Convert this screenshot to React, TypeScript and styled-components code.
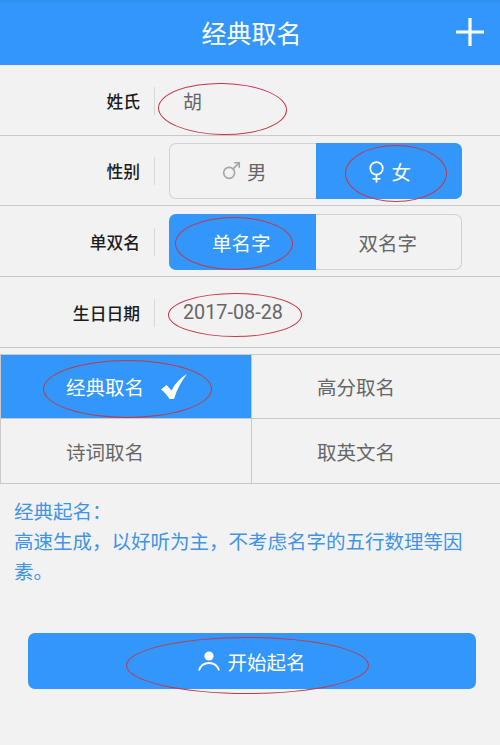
import React, { FC, ReactNode } from 'react'
import styled, { createGlobalStyle } from 'styled-components'
import { Mars, Venus } from 'lucide-react'

const BLUE = '#3296fa'
const CJK = '"Noto Sans CJK SC", "Noto Sans", sans-serif'

const GlobalStyle = createGlobalStyle`
  html, body {
    margin: 0;
    padding: 0;
    background: #f2f2f2;
  }
  body {
    font-family: Roboto, ${CJK};
  }
`

const Page = styled.div`
  width: 500px;
  height: 745px;
  overflow: hidden;
  position: relative;
  background: #f2f2f2;
`

const Header = styled.header`
  height: 65px;
  box-sizing: border-box;
  padding: 0 0 1px 3px;
  background: linear-gradient(#2f8eee 0, ${BLUE} 4px);
  color: #fff;
  position: relative;
  display: flex;
  align-items: center;
  justify-content: center;
  font-size: 25px;
`

const AddButton = styled.svg`
  position: absolute;
  right: 16px;
  top: 18px;
  width: 28px;
  height: 28px;
`

const Row = styled.div`
  height: 70.67px;
  box-sizing: border-box;
  padding-top: 2px;
  display: flex;
  align-items: center;
  position: relative;
  border-bottom: 1px solid #c9c9c9;
`

const Label = styled.div`
  width: 140px;
  text-align: right;
  font-size: 16.8px;
  font-weight: 500;
  color: #1c1c1c;
  flex: none;
`

const Divider = styled.div`
  width: 1px;
  height: 28px;
  background: #d8d8d8;
  margin: 0 14px;
  flex: none;
`

const Value = styled.div`
  color: #666;
  font-size: 19.8px;
  margin-left: 14px;
`

const NameValue = styled(Value)`
  font-size: 19px;
`

const Segmented = styled.div`
  width: 293px;
  height: 56px;
  display: flex;
  border-radius: 7px;
  overflow: hidden;
  box-shadow: inset 0 0 0 1px #d2d2d2;
`

const Segment = styled.div<{ $active?: boolean }>`
  flex: 1;
  display: flex;
  align-items: center;
  justify-content: center;
  gap: 5px;
  padding-right: 2px;
  font-size: 19.5px;
  background: ${p => (p.$active ? BLUE : 'transparent')};
  color: ${p => (p.$active ? '#fff' : '#666')};
`

const MaleSegment = styled(Segment)`
  padding: 0 0 0 2px;
`

const FemaleSegment = styled(Segment)`
  gap: 2px;
`

const GenderIcon = styled.span<{ $muted?: boolean }>`
  display: flex;
  color: ${p => (p.$muted ? '#a6a6a6' : '#fff')};
`

const TypeGrid = styled.div`
  margin-top: 6.5px;
  display: grid;
  grid-template-columns: 250px 249px;
  grid-template-rows: 64px 64px;
  border-top: 1px solid #c9c9c9;
  border-bottom: 1px solid #c9c9c9;
  border-left: 1px solid #c9c9c9;
  position: relative;
`

const TypeCell = styled.div<{ $active?: boolean; $right?: boolean; $top?: boolean }>`
  display: flex;
  align-items: center;
  padding-left: ${p => (p.$right ? '65px' : '65px')};
  gap: 17px;
  font-size: 19.5px;
  background: ${p => (p.$active ? BLUE : 'transparent')};
  color: ${p => (p.$active ? '#fff' : '#666')};
  border-left: ${p => (p.$right ? '1px solid #c9c9c9' : 'none')};
  border-bottom: ${p => (p.$top ? '1px solid #c9c9c9' : 'none')};
`

const Description = styled.div`
  padding: 14px 30px 0 14px;
  color: #3f94e6;
  font-size: 19.5px;
  line-height: 30px;
`

const StartButton = styled.div`
  position: absolute;
  left: 28px;
  top: 633px;
  width: 448px;
  height: 56px;
  border-radius: 7px;
  background: ${BLUE};
  color: #fff;
  font-size: 19.5px;
  display: flex;
  align-items: center;
  justify-content: center;
  gap: 7px;
`

const Ring = styled.div<{ $x: number; $y: number; $w: number; $h: number; $tilt?: number }>`
  position: absolute;
  left: ${p => p.$x}px;
  top: ${p => p.$y}px;
  width: ${p => p.$w}px;
  height: ${p => p.$h}px;
  box-sizing: border-box;
  border: 1px solid #c4374a;
  border-radius: 50%;
  transform: rotate(${p => p.$tilt || 0}deg);
  pointer-events: none;
`

const FieldRow: FC<{ label: string; children: ReactNode }> = ({ label, children }) => (
  <Row>
    <Label>{label}</Label>
    <Divider />
    {children}
  </Row>
)

export default function App() {
  return (
    <>
      <GlobalStyle />
      <Page>
        <Header>
          经典取名
          <AddButton viewBox="0 0 28 28">
            <path d="M0 14h28M14 0v28" stroke="#fff" strokeWidth="3.2" fill="none" />
          </AddButton>
        </Header>

        <FieldRow label="姓氏">
          <NameValue>胡</NameValue>
          <Ring $x={158} $y={18} $w={129} $h={52} $tilt={1} />
        </FieldRow>

        <FieldRow label="性别">
          <Segmented>
            <MaleSegment>
              <GenderIcon $muted>
                <Mars size={22} strokeWidth={1.8} />
              </GenderIcon>
              男
            </MaleSegment>
            <FemaleSegment $active>
              <GenderIcon>
                <Venus size={25} strokeWidth={1.7} />
              </GenderIcon>
              女
            </FemaleSegment>
          </Segmented>
          <Ring $x={345} $y={9} $w={102} $h={57} />
        </FieldRow>

        <FieldRow label="单双名">
          <Segmented>
            <Segment $active>单名字</Segment>
            <Segment>双名字</Segment>
          </Segmented>
          <Ring $x={175} $y={11} $w={118} $h={53} />
        </FieldRow>

        <FieldRow label="生日日期">
          <Value>2017-08-28</Value>
          <Ring $x={168} $y={16} $w={134} $h={44} />
        </FieldRow>

        <TypeGrid>
          <TypeCell $active $top>
            经典取名
            <svg width="28" height="26" viewBox="0 0 28 26">
              <path d="M0 15.5 5.5 11l5 5.500C14 9.500 19 4 26 0c-5.500 7-10 15-13 25H8.500C6.500 21.500 3.500 18 0 15.500z" fill="#fff" />
            </svg>
          </TypeCell>
          <TypeCell $right $top>高分取名</TypeCell>
          <TypeCell>诗词取名</TypeCell>
          <TypeCell $right>取英文名</TypeCell>
          <Ring $x={42} $y={5} $w={169} $h={58} />
        </TypeGrid>

        <Description>
          经典起名：
          <br />
          高速生成，以好听为主，不考虑名字的五行数理等因素。
        </Description>

        <StartButton>
          <svg width="22" height="20" viewBox="0 0 22 20">
            <circle cx="11" cy="5" r="4.600" fill="#fff" />
            <path d="M1 19.500c1.500-5 5-7.500 10-7.500s8.500 2.500 10 7.500" stroke="#fff" strokeWidth="1.800" fill="none" />
          </svg>
          开始起名
        </StartButton>
        <Ring $x={126} $y={637} $w={243} $h={57} />
      </Page>
    </>
  )
}
